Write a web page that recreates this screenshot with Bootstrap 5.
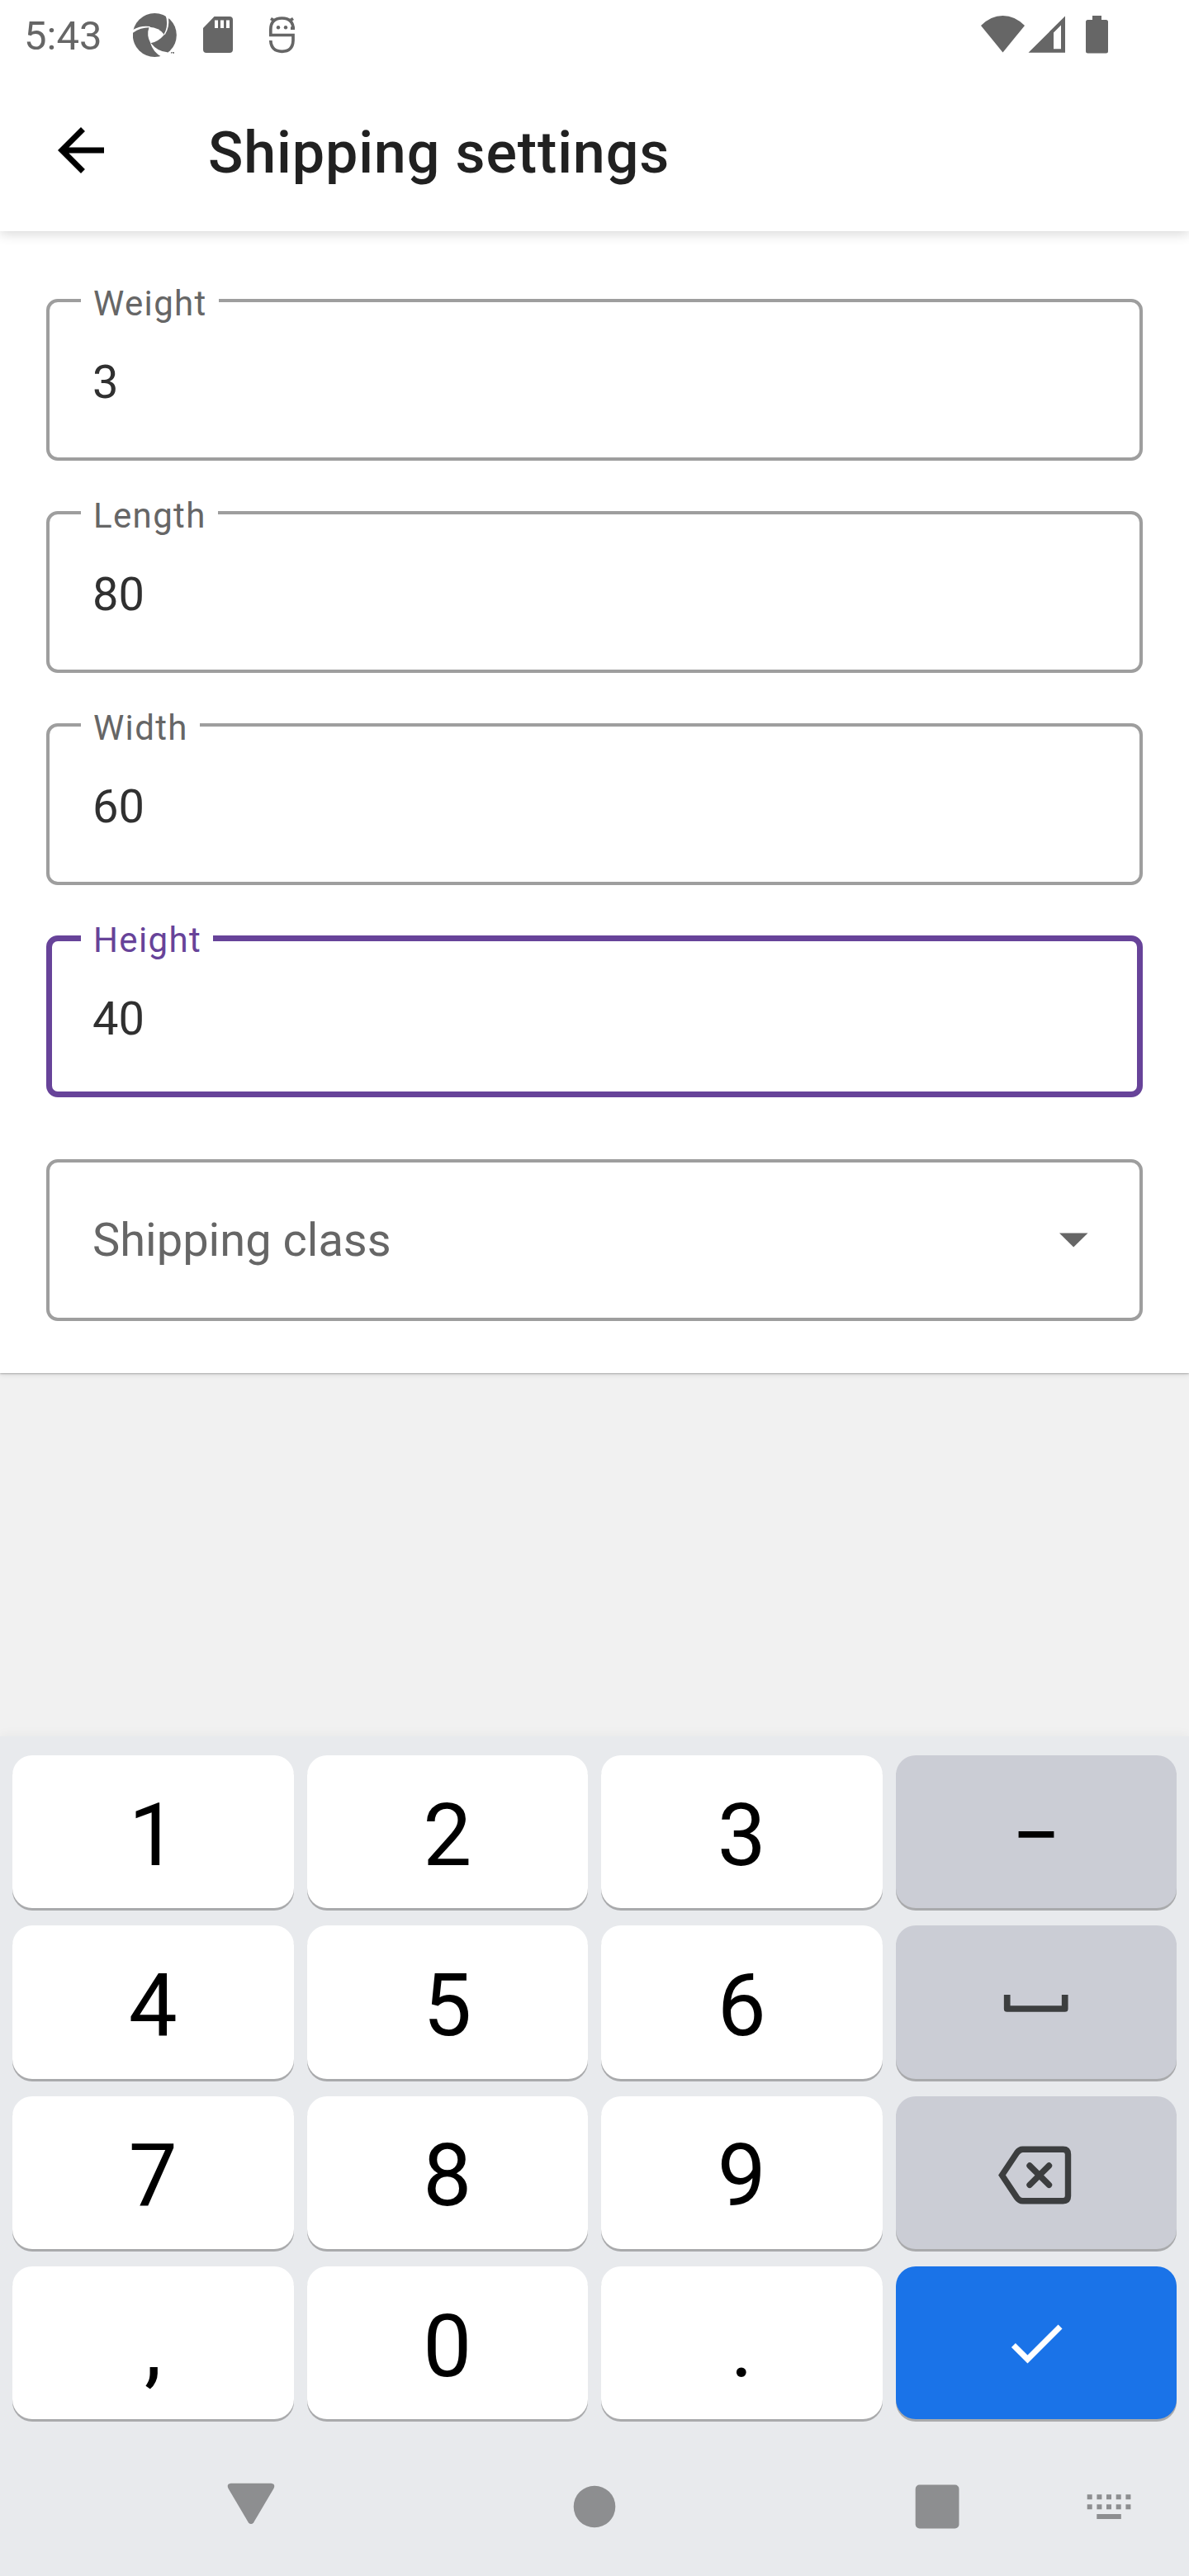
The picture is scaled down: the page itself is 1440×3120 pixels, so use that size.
<!DOCTYPE html>
<html lang="en">
<head>
<meta charset="utf-8">
<meta name="viewport" content="width=device-width, initial-scale=1">
<title>Shipping settings</title>
<link href="https://cdn.jsdelivr.net/npm/bootstrap@5.3.0/dist/css/bootstrap.min.css" rel="stylesheet">
<style>
  body { font-family: Roboto, "Liberation Sans", sans-serif; background: #f1f1f1; width: 1440px; height: 3120px; overflow: hidden; }
  svg { display: block; flex: none; }
  .statusbar { height: 84px; padding-left: 29px; color: #666; font-size: 49px; line-height: 84px; }
  .clock { width: 132px; padding-top: 2px; }
  .appbar { height: 196px; padding: 56px 56px 0; }
  .appbar h1 { font-size: 70px; font-weight: 500; color: #212121; margin-left: 112px; line-height: 84px; padding-top: 3px; letter-spacing: .87px; }
  .top-surface { box-shadow: 0 3px 14px rgba(0,0,0,.16); z-index: 2; }
  .form-surface { height: 1383px; padding: 82px 56px 0; box-shadow: 0 1px 2px rgba(0,0,0,.25), 0 3px 6px rgba(0,0,0,.08); }
  .outlined { height: 196px; margin-bottom: 61px; border: 4px solid #9e9e9e; border-radius: 14px; padding: 6px 52px 0; font-size: 56px; line-height: 56px; color: #303030; background: #fff; }
  .outlined.active { border: 7px solid #674399; padding: 6px 49px 0; margin-bottom: 75px; }
  .outlined.picker { padding-top: 0; color: #666; margin-bottom: 0; }
  .floating { position: absolute; left: 38px; top: -19px; padding: 0 14px 0 15px; background: #fff; font-size: 42px; line-height: 42px; letter-spacing: 1.35px; color: #666; }
  .active .floating { left: 35px; top: -22px; color: #674399; }
  .keyboard { height: 1017px; background: #e8eaed; box-shadow: 0 -3px 12px rgba(0,0,0,.035); padding: 23px 15px 0; }
  .keypad { display: grid; grid-template-columns: repeat(4, 340.5px); column-gap: 16px; row-gap: 21.1px; }
  .keycap { height: 185.3px; border-radius: 24px; background: #fff; box-shadow: 0 3px 0 #a9aaac; color: #000; font-size: 105px; line-height: 105px; padding-top: 9px; }
  .keycap.alt { background: #cbcdd5; }
  .keycap.done { background: #1a73e8; }
  .navrow { padding-top: 76px; }
  .navrow svg { width: 1410px; height: 60px; }
</style>
</head>
<body class="d-flex flex-column m-0">
<header class="top-surface bg-white position-relative">
  <div class="statusbar d-flex">
    <div class="clock">5:43</div>
    <svg width="210" height="84" viewBox="161 0 210 84" fill="#666" role="img" aria-label="Notifications">
      <g transform="scale(.33333)">
        <circle cx="562" cy="127.500" r="79.500"/>
        <g fill="#fff">
          <path d="M542 98Q578 99 597 126Q575 152 547 157Q531 127 542 98Z"/>
          <path d="M599 48L622 48L612 66Q617 98 599 127L596 124Q610 99 605 68Z"/>
          <path d="M480 110Q510 91 545 96V100Q511 99 480 121Z"/>
          <path d="M546 156L550 158Q570 185 608 190L615 205L588 207Q557 191 546 156Z"/>
        </g>
        <path d="M621 189h5v2h-2v4h-2v-4h-1zM627 189h2l1 2 1-2h2v6h-2v-3h-2v3h-2z"/>
      </g>
      <path fill-rule="evenodd" d="M259.500 20H278q4 0 4 4V60q0 4-4 4H250q-4 0-4-4V34ZM260 24.500V34h4v-9.500ZM267 24.500V34h4v-9.500ZM274 24.500V34h4v-9.500Z"/>
      <g fill="none" stroke="#666" stroke-width="3.700">
        <path d="M357 34.200H352"/>
        <path d="M355.200 36Q355.200 22 341.500 22Q327.800 22 327.800 36V42.500H355V49Q354.500 62.300 341.500 62.300Q328.500 62.300 327.800 49"/>
        <path d="M328 22.500l5 3M355 22.500l-5 3"/>
      </g>
      <circle cx="337" cy="33.300" r="2.200"/><circle cx="346" cy="33.300" r="2.200"/>
    </svg>
    <svg class="ms-auto" width="254" height="84" viewBox="1186 0 254 84" fill="#666" role="img" aria-label="Wi-Fi, signal and battery">
      <path d="M1188 31Q1200 19 1214.500 19T1241 31L1214.500 63.500Z"/>
      <path fill-rule="evenodd" d="M1245.500 63.700L1290 19.500V63.700ZM1276 39.500V59.300H1285V30.500Z"/>
      <path d="M1323 19h11v5h5.500q2.500 0 2.500 2.500v35.500q0 2.500-2.500 2.500h-22q-2.500 0-2.500-2.500v-35.500q0-2.500 2.500-2.500h5.500z"/>
    </svg>
  </div>
  <div class="appbar d-flex align-items-start">
    <svg width="84" height="84" viewBox="0 0 24 24" role="img" aria-label="Back"><path d="M20 11H7.830l5.590-5.590L12 4l-8 8 8 8 1.410-1.410L7.830 13H20z"/></svg>
    <h1 class="mb-0">Shipping settings</h1>
  </div>
</header>

<main class="form-surface bg-white position-relative">
  <div class="outlined position-relative d-flex align-items-center"><span class="floating">Weight</span>3</div>
  <div class="outlined position-relative d-flex align-items-center"><span class="floating">Length</span>80</div>
  <div class="outlined position-relative d-flex align-items-center"><span class="floating">Width</span>60</div>
  <div class="outlined active position-relative d-flex align-items-center"><span class="floating">Height</span>40</div>
  <div class="outlined picker d-flex align-items-center justify-content-between">Shipping class
    <svg width="45" height="20" viewBox="0 0 45 20" fill="#666"><path d="M0 1.500h34.500L17.200 18.500z"/></svg>
  </div>
</main>

<footer class="keyboard mt-auto">
  <div class="keypad">
    <div class="keycap d-flex align-items-center justify-content-center">1</div>
    <div class="keycap d-flex align-items-center justify-content-center">2</div>
    <div class="keycap d-flex align-items-center justify-content-center">3</div>
    <div class="keycap alt d-flex align-items-center justify-content-center">−</div>
    <div class="keycap d-flex align-items-center justify-content-center">4</div>
    <div class="keycap d-flex align-items-center justify-content-center">5</div>
    <div class="keycap d-flex align-items-center justify-content-center">6</div>
    <div class="keycap alt pt-0 d-flex align-items-center justify-content-center">
      <svg width="84" height="84" viewBox="0 0 84 84" fill="none" stroke="#3c3e3f" stroke-width="7.700" stroke-linejoin="round"><path d="M6.700 33V50H76.700V33"/></svg>
    </div>
    <div class="keycap d-flex align-items-center justify-content-center">7</div>
    <div class="keycap d-flex align-items-center justify-content-center">8</div>
    <div class="keycap d-flex align-items-center justify-content-center">9</div>
    <div class="keycap alt pt-0 d-flex align-items-center justify-content-center">
      <svg width="92" height="84" viewBox="0 0 92 84" fill="none" stroke="#3c3e3f" stroke-width="7.400"><path d="M4.500 45.500L22.500 18.500Q25.500 14.300 29.500 14.300H78.500Q84.500 14.300 84.500 20.300V70.800Q84.500 76.800 78.500 76.800H29.500Q25.500 76.800 22.500 72.600Z"/><path stroke-linecap="round" d="M38 34L61.500 57.300M61.500 34L38 57.300"/></svg>
    </div>
    <div class="keycap d-flex align-items-center justify-content-center">,</div>
    <div class="keycap d-flex align-items-center justify-content-center">0</div>
    <div class="keycap d-flex align-items-center justify-content-center">.</div>
    <div class="keycap done pt-0 d-flex align-items-center justify-content-center">
      <svg width="84" height="84" viewBox="0 0 24 24" fill="#fff"><path d="M9 16.170L4.830 12l-1.420 1.410L9 19 21 7l-1.410-1.410z"/></svg>
    </div>
  </div>
  <div class="navrow d-flex">
    <svg viewBox="15 3006 1410 60" fill="#8d8e90" role="img" aria-label="Navigation">
      <path d="M279.500 3007.700H328.500Q334 3008.500 331.500 3014L307 3055.500Q304 3058.500 301 3055.500L276.500 3014Q274 3008.500 279.500 3007.700Z"/>
      <circle cx="720" cy="3036" r="25.300"/>
      <rect x="1108.700" y="3009.500" width="52.800" height="53" rx="5"/>
      <path d="M1316.700 3021.200h6v6h-6zm11.700 0h6v6h-6zm11.600 0h6v6h-6zm11.700 0h6v6h-6zm11.700 0h6v6h-6zM1316.700 3033.200h6v6h-6zm11.700 0h6v6h-6zm11.600 0h6v6h-6zm11.700 0h6v6h-6zm11.700 0h6v6h-6zM1328.300 3045h29.500v6h-29.500z"/>
    </svg>
  </div>
</footer>
<script src="https://cdn.jsdelivr.net/npm/bootstrap@5.3.0/dist/js/bootstrap.bundle.min.js"></script>
</body>
</html>
